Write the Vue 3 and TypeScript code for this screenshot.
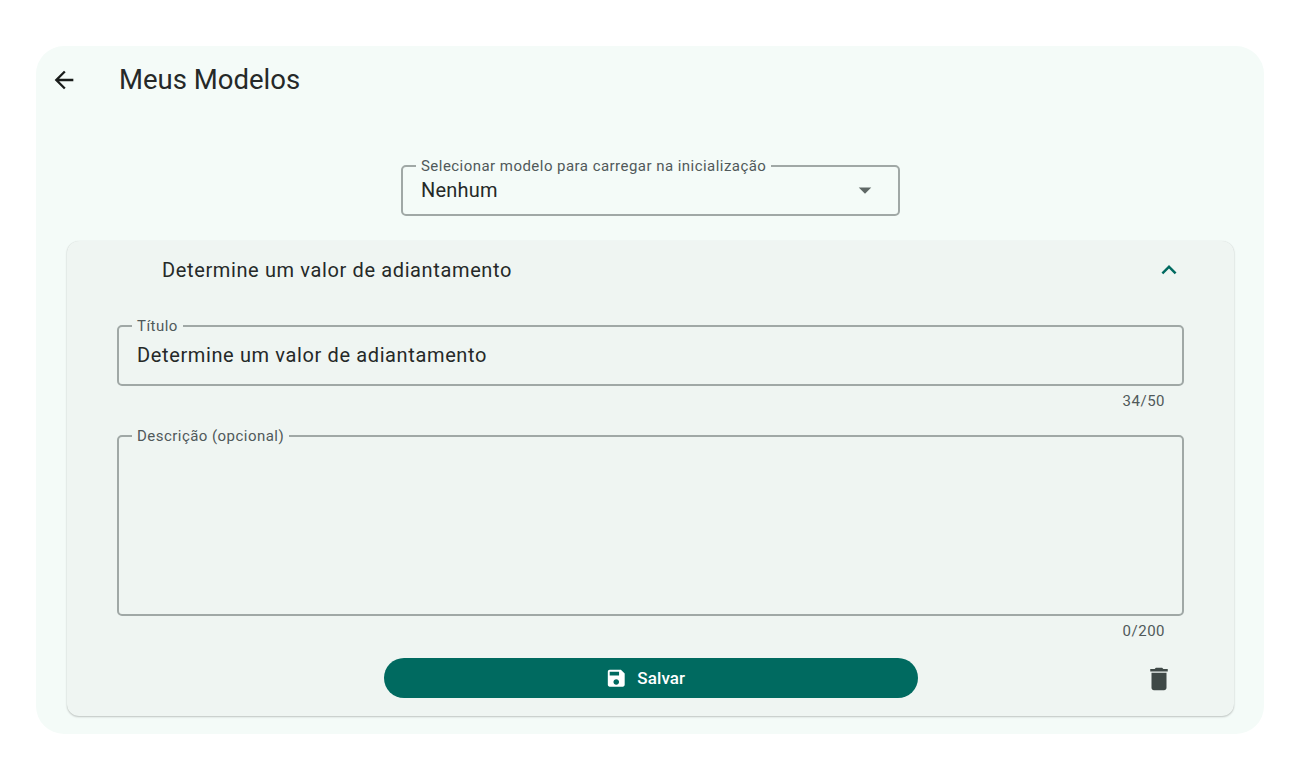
<script setup lang="ts">
const title = 'Determine um valor de adiantamento'
</script>

<template>
  <main class="page">
    <section class="dialog">
      <header class="top">
        <button class="back" aria-label="Voltar">
          <svg viewBox="0 0 24 24" width="28" height="28"><path d="M20 11H7.830l5.590-5.590L12 4l-8 8 8 8 1.410-1.410L7.830 13H20v-2z" /></svg>
        </button>
        <h1>Meus Modelos</h1>
      </header>

      <fieldset class="field select">
        <legend>Selecionar modelo para carregar na inicialização</legend>
        <span class="value">Nenhum</span>
        <svg class="caret" viewBox="0 0 24 24" width="30" height="30"><path d="M7 10l5 5 5-5z" /></svg>
      </fieldset>

      <article class="panel">
        <div class="panel-head">
          <span>{{ title }}</span>
          <svg viewBox="0 0 24 24" width="30" height="30"><path d="M12 8l-6 6 1.410 1.410L12 10.830l4.590 4.580L18 14z" /></svg>
        </div>

        <div class="form">
          <fieldset class="field title-field">
            <legend>Título</legend>
            <span class="value">{{ title }}</span>
          </fieldset>
          <div class="counter">34/50</div>

          <fieldset class="field desc-field">
            <legend>Descrição (opcional)</legend>
          </fieldset>
          <div class="counter">0/200</div>

          <div class="actions">
            <button class="save">
              <svg viewBox="0 0 24 24" width="22.500" height="22.500"><path d="M17 3H5c-1.110 0-2 .9-2 2v14c0 1.100.89 2 2 2h14c1.100 0 2-.9 2-2V7l-4-4zm-5 16c-1.660 0-3-1.340-3-3s1.340-3 3-3 3 1.340 3 3-1.340 3-3 3zm3-10H5V5h10v4z" /></svg>
              <span>Salvar</span>
            </button>
            <button class="trash" aria-label="Excluir">
              <svg viewBox="0 0 24 24" width="30" height="30"><path d="M6 19c0 1.100.9 2 2 2h8c1.100 0 2-.9 2-2V7H6v12zM19 4h-3.500l-1-1h-5l-1 1H5v2h14V4z" /></svg>
            </button>
          </div>
        </div>
      </article>
    </section>
  </main>
</template>

<style scoped>
.page {
  box-sizing: border-box;
  height: 780px;
  padding: 46px 36px;
  font-family: Roboto, "Liberation Sans", sans-serif;
  color: #252928;
}
.dialog {
  height: 688px;
  box-sizing: border-box;
  background: #f4fbf8;
  border-radius: 28px;
  padding: 0 30px 0 31px;
  display: flex;
  flex-direction: column;
}
.top {
  height: 68px;
  display: flex;
  align-items: center;
  margin-left: -31px;
}
.back, .trash {
  border: 0;
  background: none;
  padding: 0;
  display: flex;
}
.back { margin-left: 14px; width: 28px; justify-content: center; }
.back svg { fill: #191c1b; }
h1 {
  margin: 0 0 0 41px;
  font-size: 27.5px;
  font-weight: 400;
  line-height: 32px;
}
.field {
  margin: 0;
  min-width: 0;
  padding: 0 13px;
  box-sizing: border-box;
  border: 2px solid #a0a8a6;
  border-radius: 5px;
  display: block;
}
legend {
  padding: 0 5px;
  font-size: 15px;
  line-height: 16px;
  letter-spacing: 0.46px;
  color: #50595a;
}
.value {
  font-size: 20px;
  letter-spacing: 0.625px;
  line-height: 24px;
  padding-left: 5px;
  display: block;
}
.select {
  width: 499px;
  height: 58px;
  margin: 44px 0 0 334px;
  position: relative;
  flex: none;
}
.select .value { margin-top: 4px; letter-spacing: 0.19px; }
.caret {
  position: absolute;
  right: 18px;
  top: 1px;
  fill: #5f6866;
}
.panel {
  margin-top: 25px;
  height: 475px;
  flex: none;
  box-sizing: border-box;
  background: #eff5f2;
  border-radius: 12px;
  box-shadow: 0 1px 2px rgba(0, 0, 0, 0.22), 0 0 1px rgba(0, 0, 0, 0.1);
}
.panel-head {
  height: 58px;
  display: flex;
  align-items: center;
  justify-content: space-between;
  padding: 0 50px 0 95px;
  font-size: 20px;
  letter-spacing: 0.625px;
}
.panel-head svg { fill: #006a60; }
.form { padding: 19px 50px 0; }
.title-field { height: 68px; }
.title-field .value { margin-top: 9px; }
.desc-field { height: 188px; }
.counter {
  height: 42px;
  padding: 7px 19px 0 0;
  box-sizing: border-box;
  text-align: right;
  font-size: 15px;
  line-height: 16px;
  letter-spacing: 0.5px;
  color: #50595a;
}
.actions {
  display: flex;
  align-items: center;
  position: relative;
  justify-content: center;
}
.save {
  width: 534px;
  height: 40px;
  border: 0;
  border-radius: 20px;
  background: #006a60;
  color: #fff;
  font: 500 17px Roboto, sans-serif;
  letter-spacing: 0.125px;
  display: flex;
  align-items: center;
  justify-content: center;
  gap: 10px;
  padding: 0 11px 0 0;
}
.save svg { fill: #fff; }
.trash {
  position: absolute;
  right: 10px;
  top: 6px;
}
.trash svg { fill: #3f4947; }
</style>

<style>
body { background: #fff; }
</style>
